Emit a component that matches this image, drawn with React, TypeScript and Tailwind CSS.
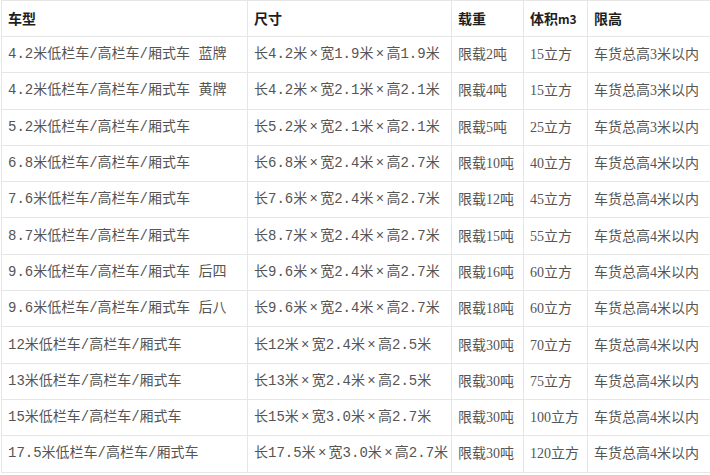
const rows: [string, string, string, string, string][] = [
  ["4.2米低栏车/高栏车/厢式车 蓝牌", "长4.2米×宽1.9米×高1.9米", "限载2吨", "15立方", "车货总高3米以内"],
  ["4.2米低栏车/高栏车/厢式车 黄牌", "长4.2米×宽2.1米×高2.1米", "限载4吨", "15立方", "车货总高3米以内"],
  ["5.2米低栏车/高栏车/厢式车", "长5.2米×宽2.1米×高2.1米", "限载5吨", "25立方", "车货总高3米以内"],
  ["6.8米低栏车/高栏车/厢式车", "长6.8米×宽2.4米×高2.7米", "限载10吨", "40立方", "车货总高4米以内"],
  ["7.6米低栏车/高栏车/厢式车", "长7.6米×宽2.4米×高2.7米", "限载12吨", "45立方", "车货总高4米以内"],
  ["8.7米低栏车/高栏车/厢式车", "长8.7米×宽2.4米×高2.7米", "限载15吨", "55立方", "车货总高4米以内"],
  ["9.6米低栏车/高栏车/厢式车 后四", "长9.6米×宽2.4米×高2.7米", "限载16吨", "60立方", "车货总高4米以内"],
  ["9.6米低栏车/高栏车/厢式车 后八", "长9.6米×宽2.4米×高2.7米", "限载18吨", "60立方", "车货总高4米以内"],
  ["12米低栏车/高栏车/厢式车", "长12米×宽2.4米×高2.5米", "限载30吨", "70立方", "车货总高4米以内"],
  ["13米低栏车/高栏车/厢式车", "长13米×宽2.4米×高2.5米", "限载30吨", "75立方", "车货总高4米以内"],
  ["15米低栏车/高栏车/厢式车", "长15米×宽3.0米×高2.7米", "限载30吨", "100立方", "车货总高4米以内"],
  ["17.5米低栏车/高栏车/厢式车", "长17.5米×宽3.0米×高2.7米", "限载30吨", "120立方", "车货总高4米以内"],
];

// × is full width in the original song font
function Size({ text }: { text: string }) {
  const parts = text.split("×");
  return (
    <>
      {parts.map((p, i) => (
        <span key={i}>
          {i > 0 && <span className="inline-block w-[13px] text-center">×</span>}
          {p}
        </span>
      ))}
    </>
  );
}

export default function App() {
  const mono = "font-['Liberation_Mono','Noto_Sans_CJK_SC',monospace]";
  const serif = "font-['Liberation_Serif','Noto_Sans_CJK_SC',serif]";
  const th = "h-[36px] border border-[#e6e6e6] px-[6px] text-left align-middle text-[14px] font-bold text-[#1e1e1e]";
  const td = "h-[36.3px] border border-[#e6e6e6] px-[6px] text-left align-middle text-[14px] text-[#555555] whitespace-nowrap";

  return (
    <div className="w-[710px] h-[475px] overflow-hidden bg-white">
      <table className="ml-[1px] w-[712px] table-fixed border-collapse font-['Noto_Sans_CJK_SC',sans-serif]">
        <colgroup>
          <col className="w-[246px]" />
          <col className="w-[204px]" />
          <col className="w-[72px]" />
          <col className="w-[64px]" />
          <col className="w-[126px]" />
        </colgroup>
        <thead>
          <tr>
            <th className={th}>车型</th>
            <th className={th}>尺寸</th>
            <th className={th}>载重</th>
            <th className={th}>
              体积<span className="text-[12px]">m3</span>
            </th>
            <th className={th}>限高</th>
          </tr>
        </thead>
        <tbody>
          {rows.map((r, i) => (
            <tr key={i}>
              <td className={`${td} ${mono}`}>{r[0]}</td>
              <td className={`${td} ${mono}`}>
                <Size text={r[1]} />
              </td>
              <td className={`${td} ${serif}`}>{r[2]}</td>
              <td className={`${td} ${serif}`}>{r[3]}</td>
              <td className={`${td} ${serif}`}>{r[4]}</td>
            </tr>
          ))}
        </tbody>
      </table>
    </div>
  );
}
